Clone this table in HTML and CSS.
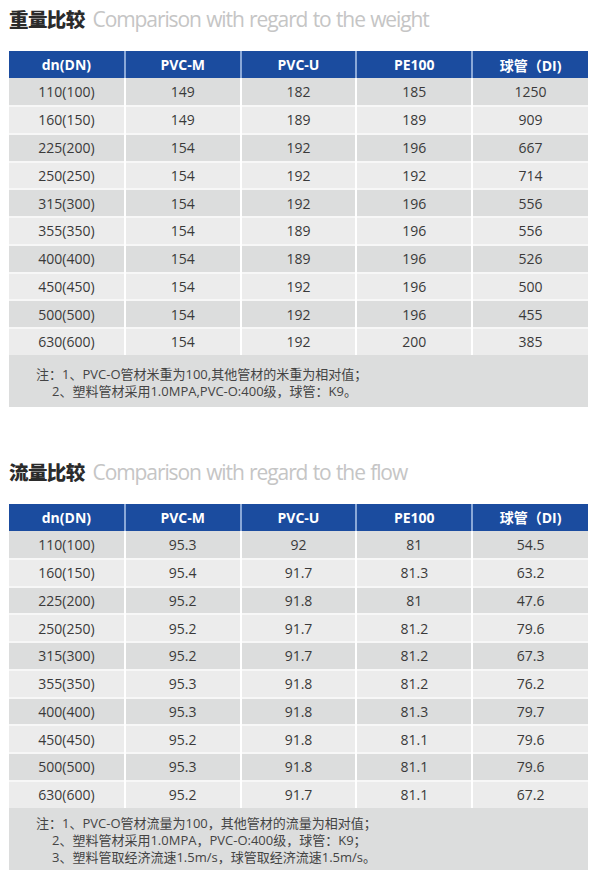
FILE: index.html
```html
<!DOCTYPE html>
<html lang="zh-CN">
<head>
<meta charset="utf-8">
<title>重量比较 / 流量比较</title>
<link rel="stylesheet" href="styles.css">
</head>
<body>
<div class="page">
  <section class="block">
    <h2 class="title"><span class="cn">重量比较</span><span class="en">Comparison with regard to the weight</span></h2>
    <table class="grid">
      <thead>
        <tr><th>dn(DN)</th><th>PVC-M</th><th>PVC-U</th><th>PE100</th><th>球管（DI)</th></tr>
      </thead>
      <tbody>
        <tr><td>110(100)</td><td>149</td><td>182</td><td>185</td><td>1250</td></tr>
        <tr><td>160(150)</td><td>149</td><td>189</td><td>189</td><td>909</td></tr>
        <tr><td>225(200)</td><td>154</td><td>192</td><td>196</td><td>667</td></tr>
        <tr><td>250(250)</td><td>154</td><td>192</td><td>192</td><td>714</td></tr>
        <tr><td>315(300)</td><td>154</td><td>192</td><td>196</td><td>556</td></tr>
        <tr><td>355(350)</td><td>154</td><td>189</td><td>196</td><td>556</td></tr>
        <tr><td>400(400)</td><td>154</td><td>189</td><td>196</td><td>526</td></tr>
        <tr><td>450(450)</td><td>154</td><td>192</td><td>196</td><td>500</td></tr>
        <tr><td>500(500)</td><td>154</td><td>192</td><td>196</td><td>455</td></tr>
        <tr><td>630(600)</td><td>154</td><td>192</td><td>200</td><td>385</td></tr>
      </tbody>
    </table>
    <div class="notes notes-a">
      <p>注：1、PVC-O管材米重为100,其他管材的米重为相对值；</p>
      <p class="sub">2、塑料管材采用1.0MPA,PVC-O:400级，球管：K9。</p>
    </div>
  </section>

  <section class="block second">
    <h2 class="title"><span class="cn">流量比较</span><span class="en">Comparison with regard to the flow</span></h2>
    <table class="grid">
      <thead>
        <tr><th>dn(DN)</th><th>PVC-M</th><th>PVC-U</th><th>PE100</th><th>球管（DI)</th></tr>
      </thead>
      <tbody>
        <tr><td>110(100)</td><td>95.3</td><td>92</td><td>81</td><td>54.5</td></tr>
        <tr><td>160(150)</td><td>95.4</td><td>91.7</td><td>81.3</td><td>63.2</td></tr>
        <tr><td>225(200)</td><td>95.2</td><td>91.8</td><td>81</td><td>47.6</td></tr>
        <tr><td>250(250)</td><td>95.2</td><td>91.7</td><td>81.2</td><td>79.6</td></tr>
        <tr><td>315(300)</td><td>95.2</td><td>91.7</td><td>81.2</td><td>67.3</td></tr>
        <tr><td>355(350)</td><td>95.3</td><td>91.8</td><td>81.2</td><td>76.2</td></tr>
        <tr><td>400(400)</td><td>95.3</td><td>91.8</td><td>81.3</td><td>79.7</td></tr>
        <tr><td>450(450)</td><td>95.2</td><td>91.8</td><td>81.1</td><td>79.6</td></tr>
        <tr><td>500(500)</td><td>95.3</td><td>91.8</td><td>81.1</td><td>79.6</td></tr>
        <tr><td>630(600)</td><td>95.2</td><td>91.7</td><td>81.1</td><td>67.2</td></tr>
      </tbody>
    </table>
    <div class="notes notes-b">
      <p>注：1、PVC-O管材流量为100，其他管材的流量为相对值；</p>
      <p class="sub">2、塑料管材采用1.0MPA，PVC-O:400级，球管：K9；</p>
      <p class="sub">3、塑料管取经济流速1.5m/s，球管取经济流速1.5m/s。</p>
    </div>
  </section>
</div>
</body>
</html>
```

FILE: styles.css
```css
html, body {
  margin: 0;
  padding: 0;
  background: #ffffff;
}

.page {
  width: 579px;
  padding-left: 9px;
  font-family: "Open Sans", "Noto Sans CJK SC", sans-serif;
  color: #3a3a3a;
}

.block {
  display: flex;
  flex-direction: column;
}

.second {
  margin-top: 46px;
}

.title {
  margin: 7px 0 20px 0;
  height: 24px;
  line-height: 24px;
  font-weight: normal;
  display: flex;
  align-items: baseline;
  white-space: nowrap;
}

.title .cn {
  font-family: "Noto Sans CJK SC", sans-serif;
  font-weight: 900;
  font-size: 19.5px;
  color: #2b2b2b;
  letter-spacing: -0.6px;
  margin-right: 8px;
}

.title .en {
  font-family: "Open Sans", sans-serif;
  font-size: 21px;
  color: #c5c5c5;
  letter-spacing: -1.1px;
  word-spacing: 1px;
}

.grid {
  width: 579px;
  border-collapse: collapse;
  table-layout: fixed;
}

.grid th,
.grid td {
  text-align: center;
  padding: 0;
  font-size: 14px;
}

.grid th {
  background: #1b4c9f;
  color: #ffffff;
  font-weight: 700;
  height: 27px;
  border-left: 2px solid #8aa8d8;
}

.grid th:first-child {
  border-left: none;
}

.grid td {
  height: 25.75px;
  color: #3a3a3a;
  border-left: 2px solid #ffffff;
  border-top: 2px solid #f7f7f7;
}

.grid td:first-child {
  border-left: none;
}

.grid tbody tr:first-child td {
  border-top: none;
  height: 27px;
}

.grid tbody tr:nth-child(odd) td {
  background: #dcdddd;
}

.grid tbody tr:nth-child(even) td {
  background: #ececec;
}

.notes {
  background: #dcdddd;
  padding-left: 27px;
  font-size: 13px;
  color: #444444;
  font-family: "Open Sans", "Noto Sans CJK SC", sans-serif;
}

.notes p {
  margin: 0;
  line-height: 17px;
  white-space: nowrap;
}

.notes .sub {
  padding-left: 16px;
}

.notes-a {
  padding-top: 11px;
  padding-bottom: 7px;
}

.notes-b {
  padding-top: 7px;
  padding-bottom: 4px;
}
```
